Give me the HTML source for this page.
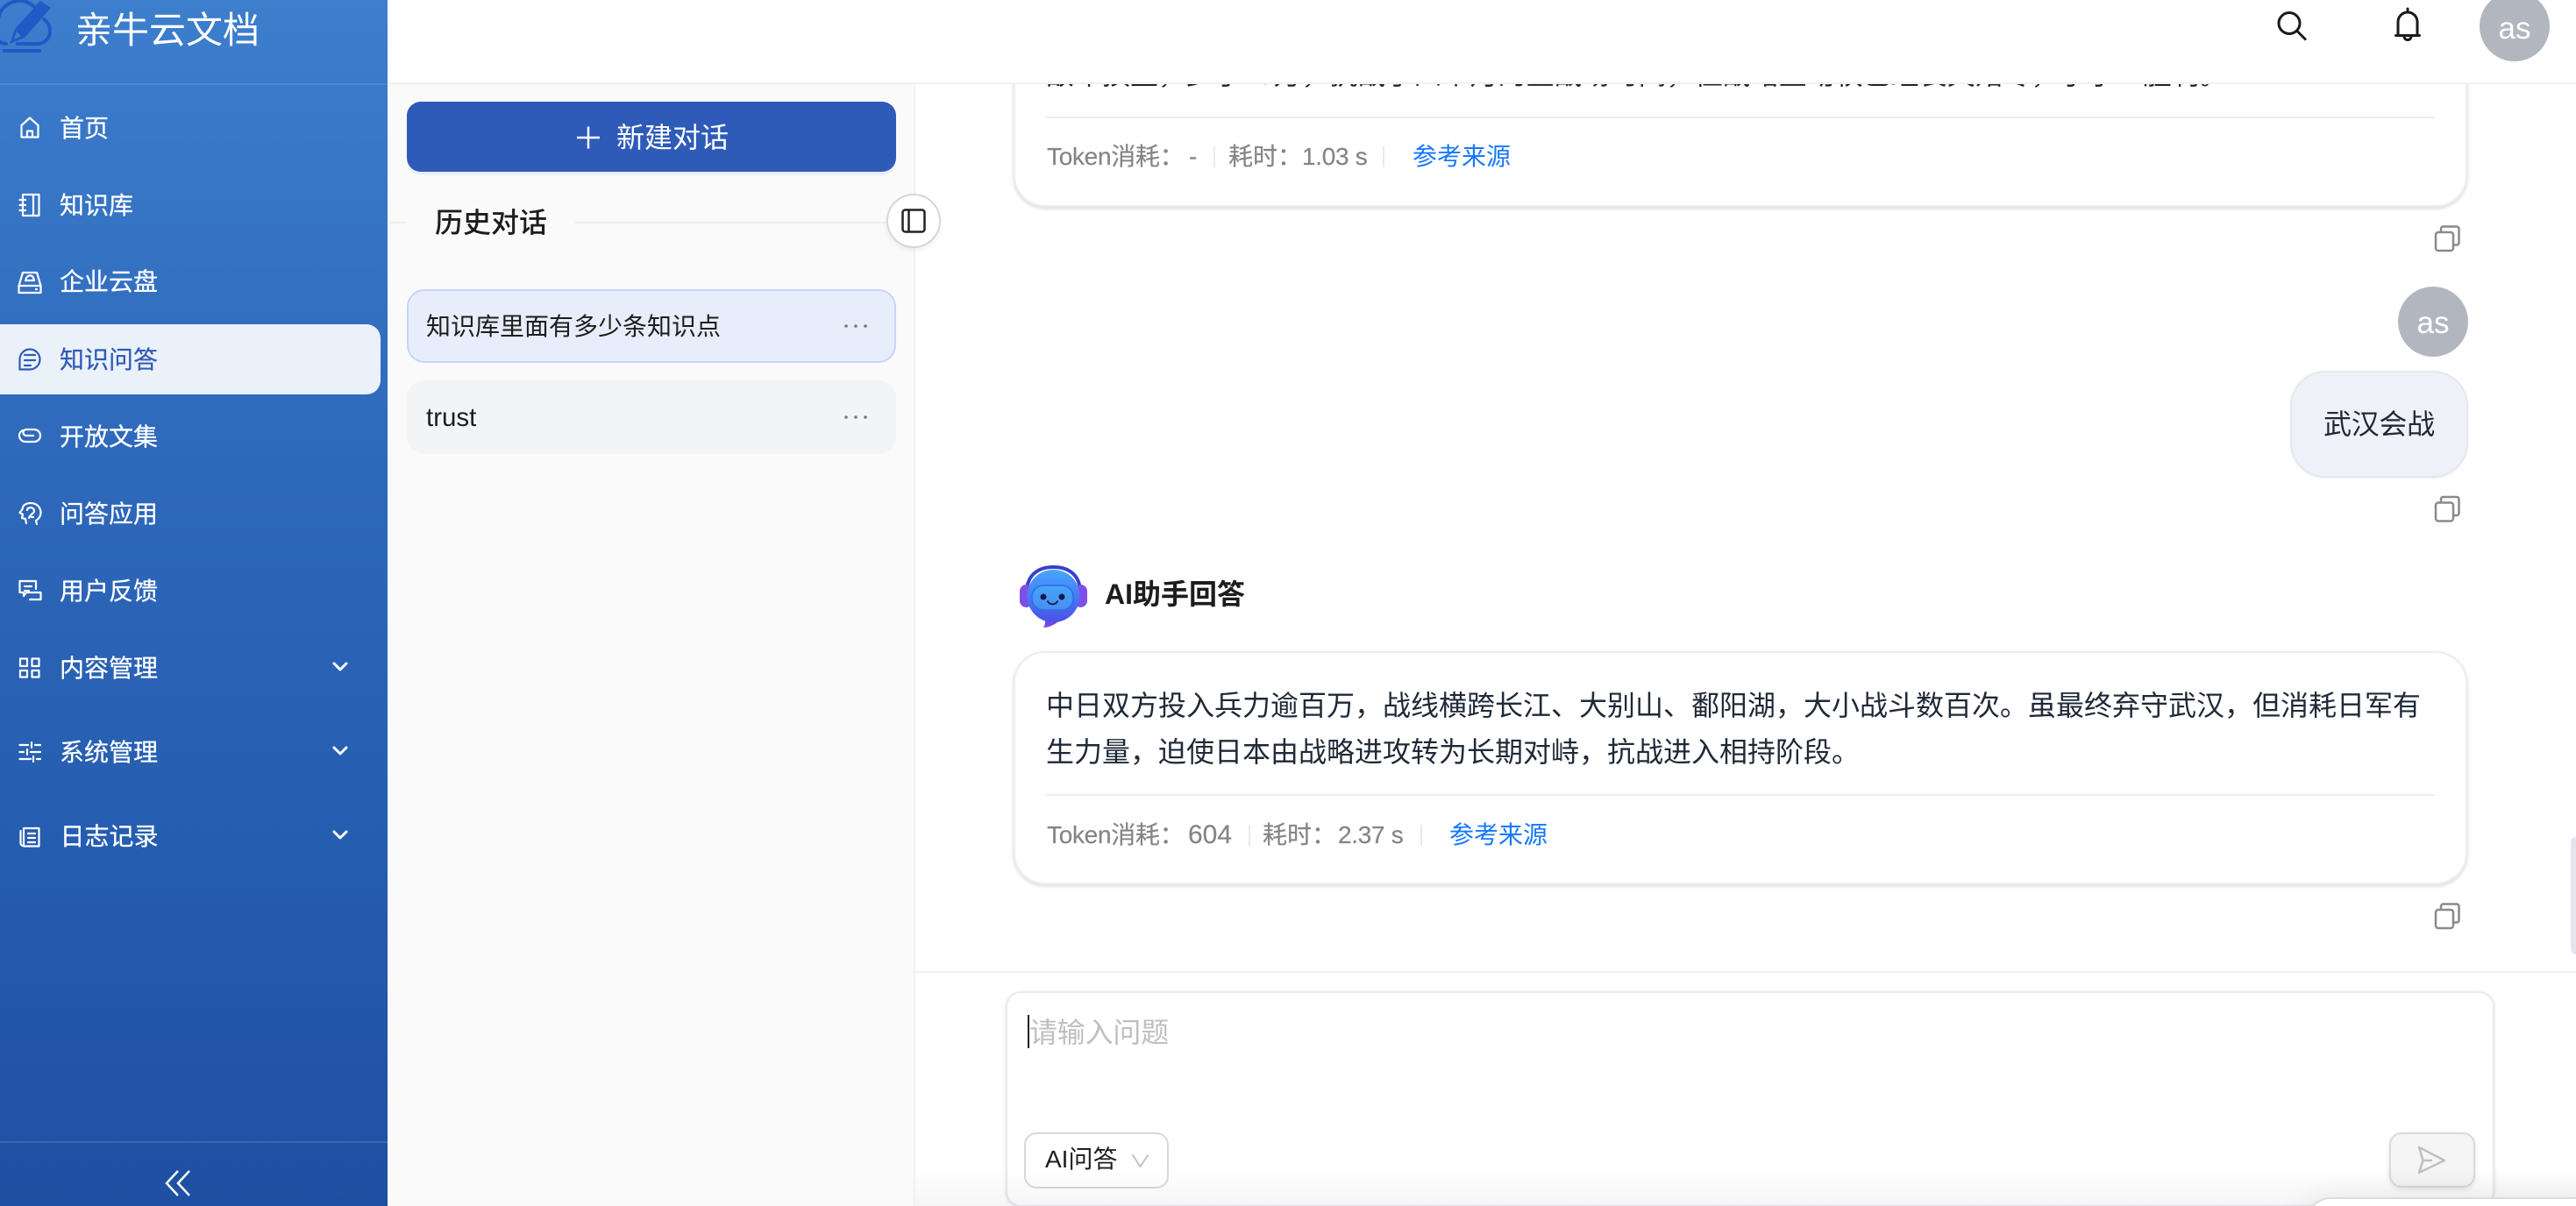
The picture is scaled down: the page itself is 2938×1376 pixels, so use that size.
<!DOCTYPE html>
<html lang="zh-CN"><head><meta charset="utf-8"><title>亲牛云文档</title>
<style>
html,body{margin:0;padding:0;width:2938px;height:1376px;overflow:hidden;background:#fff}
body{position:relative;font-family:"Liberation Sans","Noto Sans CJK SC",sans-serif;color:#222}
.a{position:absolute;box-sizing:border-box}
.t{position:absolute;white-space:nowrap;line-height:40px;height:40px}
.m{font-size:28px;color:#fff;-webkit-text-stroke:.25px #fff}
.g{font-size:28px;color:#858585;-webkit-text-stroke:.2px #858585}
.b{font-size:28px;color:#1677ff}
.s{position:absolute;width:2px;background:#eaeaea}
.card{background:#fff;border:2px solid #eeeef2;border-radius:36px;box-shadow:0 2px 3px 1px #e2e3e8}
svg{position:absolute;left:0;top:0}
</style></head><body>
<!-- panels -->
<div class="a" style="left:442px;top:0;width:602px;height:1376px;background:#fafafa;border-right:2px solid #f1f1f1"></div>

<!-- messages -->
<div class="a card" style="left:1156px;top:-100px;width:1658px;height:336px"></div>
<div class="t" style="left:1193px;top:65px;font-size:32px;color:#222">敌军损重，少于10万，抗战了四个月的主战场时间，但战略主动权已经丧失殆尽，小小一胜利。</div>
<div class="a" style="left:1193px;top:133px;width:1584px;height:2px;background:#eeeeee"></div>
<div class="t g" style="left:1194px;top:159px;letter-spacing:-.3px">Token消耗：</div>
<div class="t g" style="left:1356px;top:159px">-</div>
<div class="s" style="left:1384px;top:167px;height:24px"></div>
<div class="t g" style="left:1401px;top:159px">耗时：</div>
<div class="t g" style="left:1485px;top:159px;letter-spacing:-.3px">1.03 s</div>
<div class="s" style="left:1577px;top:167px;height:24px"></div>
<div class="t b" style="left:1611px;top:159px">参考来源</div>

<div class="a" style="left:2735px;top:327px;width:80px;height:80px;border-radius:50%;background:#b2b6bf"></div>
<div class="t" style="left:2735px;width:80px;text-align:center;top:349px;font-size:35px;color:#fff">as</div>
<div class="a" style="left:2612px;top:423px;width:203px;height:122px;border-radius:40px;background:#eef1f8;border:2px solid #e6e8ed;box-shadow:0 1px 2px #eceef2"></div>
<div class="t" style="left:2650px;top:464px;font-size:32px;color:#1f2937;letter-spacing:-.3px">武汉会战</div>

<div class="t" style="left:1260px;top:658px;font-size:32px;font-weight:700;color:#1d1d1d">AI助手回答</div>

<div class="a card" style="left:1156px;top:743px;width:1658px;height:266px"></div>
<div class="t" style="left:1193px;top:785px;font-size:32px;color:#1f2937">中日双方投入兵力逾百万，战线横跨长江、大别山、鄱阳湖，大小战斗数百次。虽最终弃守武汉，但消耗日军有</div>
<div class="t" style="left:1193px;top:838px;font-size:32px;color:#1f2937">生力量，迫使日本由战略进攻转为长期对峙，抗战进入相持阶段。</div>
<div class="a" style="left:1193px;top:906px;width:1584px;height:2px;background:#eeeeee"></div>
<div class="t g" style="left:1194px;top:933px;letter-spacing:-.3px">Token消耗：</div>
<div class="t g" style="left:1355px;top:933px;font-size:30px">604</div>
<div class="s" style="left:1424px;top:941px;height:24px"></div>
<div class="t g" style="left:1440px;top:933px">耗时：</div>
<div class="t g" style="left:1526px;top:933px;letter-spacing:-.3px">2.37 s</div>
<div class="s" style="left:1620px;top:941px;height:24px"></div>
<div class="t b" style="left:1653px;top:933px">参考来源</div>

<!-- scrollbar -->
<div class="a" style="left:2932px;top:955px;width:6px;height:134px;background:#e3e5ee;border-radius:6px 0 0 6px"></div>

<!-- input -->
<div class="a" style="left:1044px;top:1108px;width:1894px;height:2px;background:#f1f1f3"></div>
<div class="a" style="left:1147px;top:1131px;width:1698px;height:246px;background:#fff;border:2px solid #e9e9ee;border-radius:18px;box-shadow:0 1px 4px #e4e4ea"></div>
<div class="t" style="left:1174px;top:1158px;font-size:32px;color:#bfbfbf;letter-spacing:-.2px">请输入问题</div>
<div class="a" style="left:1172px;top:1158px;width:2px;height:38px;background:#222"></div>
<div class="a" style="left:1168px;top:1292px;width:165px;height:64px;border:2px solid #d9d9d9;border-radius:14px;background:#fff"></div>
<div class="t" style="left:1192px;top:1303px;font-size:28px;color:#1d1d1d">AI问答</div>
<div class="a" style="left:2725px;top:1292px;width:98px;height:63px;border:2px solid #dadada;border-radius:14px;background:#f5f5f5;box-shadow:0 2px 6px rgba(0,0,0,.1)"></div>
<div class="a" style="left:1044px;top:1335px;width:1894px;height:41px;background:linear-gradient(rgba(0,0,0,0),rgba(0,0,0,.04))"></div>
<div class="a" style="left:2629px;top:1366px;width:343px;height:60px;background:#fff;border:2px solid #dcdcdc;border-radius:30px;box-shadow:0 0 40px rgba(0,0,0,.08)"></div>

<!-- header -->
<div class="a" style="left:442px;top:0;width:2496px;height:96px;background:#fff;border-bottom:2px solid #f1f1f3"></div>
<div class="a" style="left:2828px;top:-10px;width:80px;height:80px;border-radius:50%;background:#b2b6bf"></div>
<div class="t" style="left:2828px;width:80px;text-align:center;top:13px;font-size:35px;color:#fff">as</div>

<!-- history panel -->
<div class="a" style="left:464px;top:116px;width:558px;height:80px;border-radius:16px;background:#2f5bb8;box-shadow:0 4px 0 #e9eef9"></div>
<div class="t" style="left:703px;top:137px;font-size:32px;color:#fff">新建对话</div>
<div class="a" style="left:445px;top:253px;width:19px;height:2px;background:#eeeeee"></div>
<div class="a" style="left:656px;top:253px;width:356px;height:2px;background:#eeeeee"></div>
<div class="t" style="left:496px;top:234px;font-size:32px;font-weight:500;color:#1d1d1d">历史对话</div>
<div class="a" style="left:1011px;top:221px;width:62px;height:62px;border-radius:50%;background:#fff;border:2px solid #d6d6d6;box-shadow:0 3px 6px rgba(0,0,0,.06)"></div>
<div class="a" style="left:464px;top:330px;width:558px;height:84px;background:#e8edfc;border:2px solid #c6d4fa;border-radius:20px"></div>
<div class="t" style="left:486px;top:353px;font-size:28px;color:#1d1d1d">知识库里面有多少条知识点</div>
<div class="a" style="left:464px;top:434px;width:558px;height:84px;background:#f3f4f6;border-radius:20px"></div>
<div class="t" style="left:486px;top:457px;font-size:29.5px;color:#1d1d1d">trust</div>

<!-- sidebar -->
<div class="a" style="left:0;top:0;width:442px;height:1376px;background:linear-gradient(180deg,#3d7ecd 0%,#2f69bb 37%,#255db0 70%,#1f4fa2 100%)"></div>
<div class="a" style="left:0;top:95px;width:442px;height:2px;background:rgba(255,255,255,.1)"></div>
<div class="a" style="left:0;top:1302px;width:442px;height:2px;background:rgba(255,255,255,.13)"></div>
<div class="t" style="left:86px;top:13px;font-size:42px;line-height:44px;height:44px;color:#fff">亲牛云文档</div>
<div class="t m" style="left:68px;top:127px">首页</div>
<div class="t m" style="left:68px;top:215px">知识库</div>
<div class="t m" style="left:68px;top:302px">企业云盘</div>
<div class="a" style="left:0;top:370px;width:434px;height:80px;background:#ebf1f9;border-radius:0 16px 16px 0"></div>
<div class="t m" style="left:68px;top:391px;color:#2f5cb8;-webkit-text-stroke:.25px #2f5cb8">知识问答</div>
<div class="t m" style="left:68px;top:479px">开放文集</div>
<div class="t m" style="left:68px;top:567px">问答应用</div>
<div class="t m" style="left:68px;top:655px">用户反馈</div>
<div class="t m" style="left:68px;top:743px">内容管理</div>
<div class="t m" style="left:68px;top:839px">系统管理</div>
<div class="t m" style="left:68.500px;top:935px">日志记录</div>

<!-- icons -->
<svg width="2938" height="1376" viewBox="0 0 2938 1376" fill="none">
<defs>
<linearGradient id="hd" x1="0" y1="0" x2="0" y2="1"><stop offset="0" stop-color="#45a8ff"/><stop offset="1" stop-color="#4a50ea"/></linearGradient>
<linearGradient id="sc" x1="0" y1="0" x2="0" y2="1"><stop offset="0" stop-color="#45a5fb"/><stop offset="1" stop-color="#4a8df2"/></linearGradient>
<g id="cp" stroke="#8a8a8a" stroke-width="2.500" stroke-linejoin="round">
<rect x="2778" y="268" width="20" height="21" rx="3"/>
<path d="M2784 267V264a2.500 2.500 0 0 1 2.500-2.500H2802a2.500 2.500 0 0 1 2.500 2.500V280a2.500 2.500 0 0 1-2.500 2.500H2799"/>
</g>
</defs>
<!-- logo -->
<g stroke="#1e5bc6" stroke-width="4" stroke-linecap="round">
<path d="M7 50C-3 50-6 40-4 32M-2 22C0 8 12 0 26 1C32 2 38 6 41 10"/>
<path d="M20 50H42C52 50 57 43 57 35C57 29 54 25 50 22"/>
<path d="M5 58H45"/>
</g>
<path d="M11 50L17 33L46 1L58 9L28 43Z" fill="#1e5bc6"/>
<path d="M16 45L19 36L24 41Z" fill="#3d7ecd"/>
<!-- nav icons -->
<g stroke="#fff" stroke-width="2.200" stroke-linejoin="round" stroke-linecap="round">
<path d="M24.500 156.500V143L34 134.500L43.500 143V156.500ZM31 156.500V149.500H37V156.500"/>
<path d="M26 222H44.500V246H26ZM38 222V246M22.500 228H29M22.500 234H29M22.500 240H29"/>
<path d="M26 311H42L46.500 326V334H21.500V326ZM21.500 326H46.500M29 320H39M30 320a3 3 0 0 1 1-4a4 4 0 0 1 7 1a2.500 2.500 0 0 1 0 3M41 330H42"/>
<path d="M22.500 421.500V410a11.500 11.500 0 1 1 11.500 11.500ZM28 405H40M28 411H40M28 417H35" stroke="#2f5cb8"/>
<path d="M38 497H30a3.500 3.500 0 0 1 0-7H39a7 7 0 0 1 7 7a7 7 0 0 1-7 7H29a7 7 0 0 1-7-7a6.500 6.500 0 0 1 4-6"/>
<path d="M30 597L29 592L25 591L26 587L22.500 585L25.500 581C26 576 30 574 35 574C42 574 46.500 579 46.500 585C46.500 589 44 592 41 594L42 598M31 582C31 578 39 578 39 583C39 586 35 586 33 591M36 590H38"/>
<path d="M42 676H30L27 680V676H22.500V663H41V672M28 669H36M28 674H33M38 676H46.500V684H34"/>
<path d="M23 751.500H31V760H23ZM36.500 751.500H44.500V760H36.500ZM23 765H31V772.500H23ZM36.500 765H44.500V772.500H36.500Z"/>
<path d="M22.500 850H32M40 850H46M36 847V853M22.500 858H27M35 858H46M31 855V861M22.500 866H35M42 866H46M38 863V869"/>
<path d="M27 945H44.500V965.500H27ZM23.500 948V962a3 3 0 0 0 3 3M32 951H40M32 956H40M32 961H40"/>
</g>
<g stroke="#fff" stroke-width="3" stroke-linecap="round" stroke-linejoin="round">
<path d="M381 757L388 764L395 757M381 853L388 860L395 853M381 949L388 956L395 949"/>
</g>
<path d="M203 1336L190 1350L203 1364M216 1336L203 1350L216 1364" stroke="#fff" stroke-width="2.500"/>
<!-- new chat plus -->
<path d="M658 157H684M671 144.500V169.500" stroke="#fff" stroke-width="2.500"/>
<!-- panel toggle -->
<rect x="1029.500" y="239.500" width="25" height="25" rx="3" stroke="#222" stroke-width="2.500"/>
<path d="M1036.500 239.500V264.500" stroke="#222" stroke-width="2.500"/>
<!-- dots -->
<g fill="#777"><circle cx="965" cy="372" r="1.800"/><circle cx="976" cy="372" r="1.800"/><circle cx="987" cy="372" r="1.800"/><circle cx="965" cy="476" r="1.800"/><circle cx="976" cy="476" r="1.800"/><circle cx="987" cy="476" r="1.800"/></g>
<!-- header icons -->
<circle cx="2611" cy="26.500" r="12" stroke="#1a1a1a" stroke-width="3"/>
<path d="M2620 35.500L2630 45.500" stroke="#1a1a1a" stroke-width="3"/>
<path d="M2735 39V25a11 11 0 0 1 22 0V39M2732.500 40.500H2759.500M2746 10V14M2742 41.500a4 4 0 0 0 8 0" stroke="#1a1a1a" stroke-width="3" stroke-linecap="round"/>
<!-- copy icons -->
<use href="#cp" y="-3"/>
<use href="#cp" y="305.500"/>
<use href="#cp" y="770"/>
<!-- robot -->
<path d="M1189 703C1193 708 1193 711 1190 716C1198 716 1206 711 1212 705Z" fill="#7a45e8"/>
<path d="M1171 676C1171 656 1184 647 1201.500 647C1219 647 1232 656 1232 676" stroke="#3a3fce" stroke-width="4"/>
<rect x="1163" y="667" width="15" height="26" rx="7.500" fill="#7d4fe8"/>
<rect x="1225" y="667" width="15" height="26" rx="7.500" fill="#7d4fe8"/>
<circle cx="1201.500" cy="680" r="30" fill="url(#hd)"/>
<rect x="1177" y="668" width="47" height="28" rx="13" fill="url(#sc)" stroke="#2d6fe0" stroke-width="1.500"/>
<circle cx="1190" cy="681" r="3.500" fill="#141a4a"/><circle cx="1211" cy="681" r="3.500" fill="#141a4a"/>
<path d="M1195 686C1197 690.500 1204 690.500 1206 686" stroke="#141a4a" stroke-width="1.800" stroke-linecap="round"/>
<!-- select chevron -->
<path d="M1291.500 1317.500L1300.500 1331L1309.500 1317.500" stroke="#bfbfbf" stroke-width="1.800"/>
<!-- send -->
<path d="M2759 1309L2788 1324L2759 1338L2763.500 1324ZM2763.500 1324L2774 1324" stroke="#bfbfbf" stroke-width="2.500" stroke-linejoin="round"/>
</svg>
</body></html>
